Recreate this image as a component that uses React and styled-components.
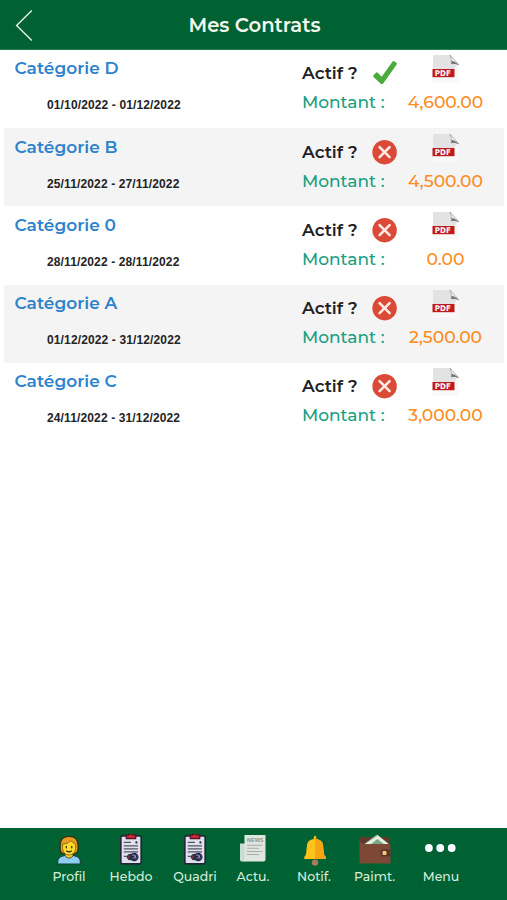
import styled, { createGlobalStyle } from "styled-components";

const contracts = [
  { name: "Catégorie D", dates: "01/10/2022 - 01/12/2022", active: true, amount: "4,600.00" },
  { name: "Catégorie B", dates: "25/11/2022 - 27/11/2022", active: false, amount: "4,500.00" },
  { name: "Catégorie 0", dates: "28/11/2022 - 28/11/2022", active: false, amount: "0.00" },
  { name: "Catégorie A", dates: "01/12/2022 - 31/12/2022", active: false, amount: "2,500.00" },
  { name: "Catégorie C", dates: "24/11/2022 - 31/12/2022", active: false, amount: "3,000.00" },
];

const tabs = [
  { label: "Profil", Icon: ProfileIcon },
  { label: "Hebdo", Icon: ClipboardIcon },
  { label: "Quadri", Icon: ClipboardIcon },
  { label: "Actu.", Icon: NewsIcon },
  { label: "Notif.", Icon: BellIcon },
  { label: "Paimt.", Icon: WalletIcon },
  { label: "Menu", Icon: DotsIcon },
];

function App() {
  return (
    <Screen>
      <GlobalStyle />
      <Header>
        <BackButton aria-label="Retour">
          <svg width="18" height="32" viewBox="0 0 18 32" fill="none">
            <path d="M16.8 .6L1.6 15.5L16.8 30.6" stroke="#e6f4df" strokeWidth="1.4" />
          </svg>
        </BackButton>
        <Title>Mes Contrats</Title>
      </Header>
      <List>
        {contracts.map((contract) => (
          <ContractRow key={contract.name} {...contract} />
        ))}
      </List>
      <TabBar>
        {tabs.map(({ label, Icon }) => (
          <Tab key={label}>
            <Icon />
            <TabLabel>{label}</TabLabel>
          </Tab>
        ))}
      </TabBar>
    </Screen>
  );
}

function ContractRow({ name, dates, active, amount }) {
  return (
    <Row>
      <Info>
        <Category>{name}</Category>
        <Dates>{dates}</Dates>
      </Info>
      <Status>
        <StatusLine>
          <Question>Actif ?</Question>
          {active ? <CheckIcon /> : <CrossIcon />}
        </StatusLine>
        <AmountLabel>Montant :</AmountLabel>
      </Status>
      <Payment>
        <PdfIcon />
        <Amount>{amount}</Amount>
      </Payment>
    </Row>
  );
}

function CheckIcon() {
  return (
    <svg width="26" height="26" viewBox="0 0 26 26">
      <path d="M1.5 15.2L4.2 12.5Q5 11.9 5.8 12.7L9.7 16.7L20.6 1.6Q21.5 .7 22.5 1.4L24.5 2.8Q25.3 3.6 24.7 4.6L11.2 23.4Q9.9 24.9 8.5 23.5L1.5 17Q.7 16.1 1.5 15.2Z" fill="#4cab3d" />
    </svg>
  );
}

function CrossIcon() {
  return (
    <svg width="26" height="26" viewBox="0 0 26 26">
      <circle cx="12.6" cy="13.2" r="12.2" fill="#db4937" />
      <path d="M7.6 8.2L17.6 18.2M17.6 8.2L7.6 18.2" stroke="#fbeae4" strokeWidth="2.6" strokeLinecap="round" />
    </svg>
  );
}

function PdfIcon() {
  return (
    <svg width="30" height="32" viewBox="0 0 30 32">
      <path d="M2 1H19L27.5 9.5V28.5H2Z" fill="#f8f8f8" />
      <path d="M2 1H19L27 10L23 15H2Z" fill="#e3e3e3" />
      <path d="M19 1L27.8 10.6Q23.2 8.6 20.2 9.6Q20.8 4.5 19 1Z" fill="#f1f1f1" />
      <path d="M19 1L27.8 10.8Q24 8.6 20.2 9.8Q21.1 5.4 19 1" fill="none" stroke="#a3a8a6" strokeWidth=".8" />
      <path d="M20.2 9.9Q20.8 8.2 20.7 6.8Q23.6 7.3 27.8 10.9Q23.8 9.2 20.2 9.9Z" fill="#6d7471" />
      <rect x="1.5" y="15" width="22" height="8.2" fill="#bf1b1c" />
      <text x="3.8" y="22" textLength="16" lengthAdjust="spacingAndGlyphs" fontFamily="DejaVu Sans, sans-serif" fontSize="7.8" fontWeight="700" fill="#fff">PDF</text>
    </svg>
  );
}

function ProfileIcon() {
  return (
    <svg width="26" height="32" viewBox="0 0 26 32">
      <path d="M1.7 30V27Q2.2 22.8 7 22L10 20.7H16L19 22Q23.8 22.8 24.3 27V30Z" fill="#8dcef3" stroke="#183c3a" strokeWidth="1.1" />
      <path d="M9 18H17V22Q13 26.3 9 22Z" fill="#f7c831" stroke="#3b3b16" strokeWidth=".8" />
      <path d="M4.2 11Q4.2 2.5 13 2.5Q22 2.5 22 11V15Q22 19.5 17.4 19.8H8.6Q4.2 19.3 4.2 15Z" fill="#e99b22" stroke="#302d12" strokeWidth="1.1" />
      <path d="M6.6 10.4Q12.5 10 14.7 6.8L19.6 10.4V14.5Q19 20.6 13 21.1Q7.2 20.5 6.6 14.5Z" fill="#ffdb2c" stroke="#534611" strokeWidth=".6" />
      <path d="M10.3 12.3V13.8M15.8 12.3V13.8M10.7 17Q13 18.6 15.4 17" fill="none" stroke="#30240a" strokeWidth="1.2" strokeLinecap="round" />
    </svg>
  );
}

function ClipboardIcon() {
  return (
    <svg width="26" height="32" viewBox="0 0 26 32">
      <rect x="2.8" y="1.8" width="20.4" height="28" rx="1.5" fill="#dfe0ec" stroke="#222638" strokeWidth="1.7" />
      <path d="M8.3 1H10.5Q11 0 13 0Q15 0 15.5 1H17.7V4.7H8.3Z" fill="#c92637" stroke="#481521" strokeWidth="1.2" />
      <path d="M5.8 8.4H13M5.8 11.9H20M5.8 14.9H20M5.8 17.9H20M5.8 22.3H8.8" stroke="#555568" strokeWidth="1.2" />
      <path d="M18.4 7.3V9.5" stroke="#282b44" strokeWidth="1.8" />
      <path d="M12.4 20.1Q8.9 20.6 9.3 23.6Q9.8 26.3 13.2 25.8Z" fill="#713044" stroke="#252738" strokeWidth="1" />
      <circle cx="16.2" cy="23" r="4.3" fill="#252a49" />
      <path d="M14.2 21.2Q18 20.3 17.8 24.7M14.6 24.7L18.2 21.4" fill="none" stroke="#a4acd0" strokeWidth=".9" />
    </svg>
  );
}

function NewsIcon() {
  return (
    <svg width="28" height="32" viewBox="0 0 28 32">
      <path d="M1 9.5H6V27.5H2.5Q1 27.5 1 25.5Z" fill="#c8ddd6" />
      <path d="M5.5 1H26.5V25.5Q26.5 27.5 24.5 27.5H4.8Q5.5 26.8 5.5 25.3Z" fill="#e1e5df" />
      <text x="8" y="7.7" textLength="16.5" lengthAdjust="spacingAndGlyphs" fontFamily="Liberation Sans, sans-serif" fontSize="5.5" fontWeight="700" fill="#8e9991">NEWS</text>
      <path d="M8 11.3H23.5M8 14.3H20M8 17.5H23.5M8 20.5H20" stroke="#a8afab" strokeWidth="1" />
    </svg>
  );
}

function BellIcon() {
  return (
    <svg width="26" height="32" viewBox="0 0 26 32">
      <circle cx="14" cy="28.6" r="3.2" fill="#a77b5c" />
      <path d="M12.8 5V3Q14 .5 15.2 3V5Q21.5 6 22 11L22.8 19Q22.8 21 24.7 22.7V25H3.3V22.7Q5.2 21 5.2 19L6 11Q6.5 6 12.8 5Z" fill="#ffc11c" />
      <path d="M14 1.7Q14.9 1.8 15.2 3V5Q21.5 6 22 11L22.8 19Q22.8 21 24.7 22.7V25H14Z" fill="#f7a516" />
    </svg>
  );
}

function WalletIcon() {
  return (
    <svg width="34" height="32" viewBox="0 0 34 32">
      <path d="M2 3H32V12H2Z" fill="#5f392b" />
      <path d="M5.5 10.5L19 .5L31.5 10.5Z" fill="#9bbea1" />
      <path d="M6.5 10.5L20 1.5L31 10.5Z" fill="#e8eee0" />
      <path d="M12.5 10.5L19.5 5L26.5 10.5Z" fill="#7ba785" />
      <path d="M1.5 5Q2 9.3 7 10H32.5V29.5H2.8Q1.5 29.5 1.5 27.5Z" fill="#7d4836" />
      <path d="M24 15.4H32.5V22.6H24Q22.5 22.2 22.5 19Q22.5 15.8 24 15.4Z" fill="#5b3529" />
      <rect x="24.5" y="17" width="4" height="4" rx="1" fill="#f5ca68" />
    </svg>
  );
}

function DotsIcon() {
  return (
    <svg width="32" height="32" viewBox="0 0 32 32">
      <g fill="#fff">
        <circle cx="3.9" cy="14" r="3.9" />
        <circle cx="15.2" cy="14" r="3.9" />
        <circle cx="26.7" cy="14" r="3.9" />
      </g>
    </svg>
  );
}

const GlobalStyle = createGlobalStyle`
  * {
    box-sizing: border-box;
  }

  body {
    margin: 0;
    background: #fff;
    font-family: Montserrat, Inter, sans-serif;
  }

  svg {
    display: block;
    flex: none;
  }
`;

const Screen = styled.div`
  display: flex;
  flex-direction: column;
  height: 100vh;
`;

const Header = styled.header`
  display: grid;
  grid-template-columns: 50px 1fr 48px;
  align-items: center;
  height: 50px;
  flex: none;
  background: #006233;
  border-bottom: 1px solid #277c52;
`;

const BackButton = styled.button`
  padding: 2px 0 0 15px;
  border: 0;
  background: none;
`;

const Title = styled.h1`
  margin: 0;
  color: #f2f8ee;
  font-size: 19.6px;
  line-height: 24px;
  font-weight: 600;
  text-align: center;
`;

const List = styled.main`
  flex: 1;
  padding: 0 3px 0 4px;
`;

const Row = styled.section`
  display: grid;
  grid-template-columns: 298px 96px 1fr;
  height: 78.2px;

  &:nth-child(even) {
    background: #f4f4f4;
  }
`;

const Info = styled.div`
  display: flex;
  flex-direction: column;
  gap: 17px;
  padding: 6.4px 0 0 10.5px;
`;

const Category = styled.span`
  color: #2d83cc;
  font-size: 17px;
  line-height: 24px;
  font-weight: 600;
`;

const Dates = styled.span`
  padding-left: 32.5px;
  color: #242424;
  font-family: "Liberation Sans", Arial, sans-serif;
  font-size: 12px;
  line-height: 16px;
  font-weight: 700;
  letter-spacing: 0.13px;
  white-space: nowrap;
`;

const Status = styled.div`
  display: flex;
  flex-direction: column;
  padding-top: 10.4px;
  gap: 4px;
`;

const StatusLine = styled.div`
  display: flex;
  align-items: center;
  justify-content: space-between;
  height: 26px;
`;

const Question = styled.span`
  color: #202124;
  font-size: 17px;
  font-weight: 600;
`;

const AmountLabel = styled.span`
  color: #18a083;
  font-size: 17px;
  line-height: 24px;
  font-weight: 500;
  white-space: nowrap;
`;

const Payment = styled.div`
  display: flex;
  flex-direction: column;
  align-items: center;
  padding: 4.4px 11px 0 0;
  gap: 4px;
`;

const Amount = styled.span`
  color: #fb8c1d;
  font-size: 17.2px;
  line-height: 24px;
  font-weight: 500;
`;

const TabBar = styled.nav`
  display: grid;
  grid-template-columns: 62px 62px 66px 50px 72px 49px 84px;
  height: 72px;
  flex: none;
  padding: 6px 0 0 38px;
  background: #006233;
`;

const Tab = styled.div`
  display: flex;
  flex-direction: column;
  align-items: center;
  gap: 1px;
`;

const TabLabel = styled.span`
  color: #d7eddb;
  font-size: 12.5px;
  line-height: 20px;
  font-weight: 500;
`;

export default App;
